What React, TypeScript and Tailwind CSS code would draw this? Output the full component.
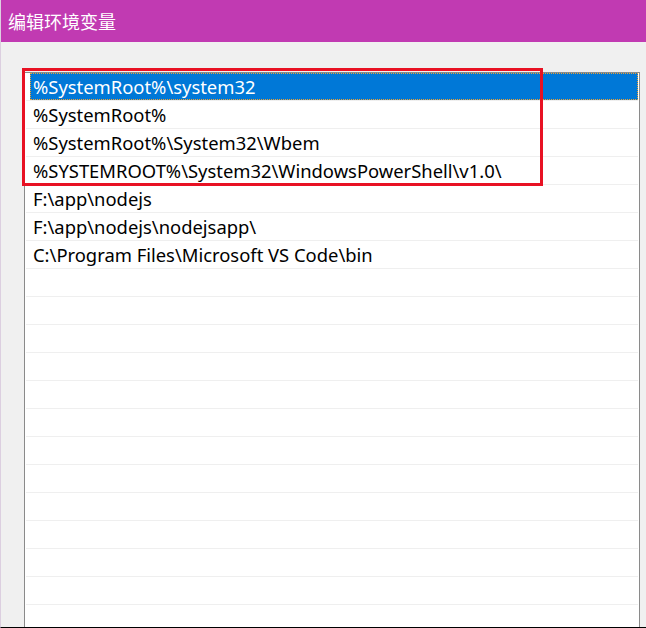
import React from 'react';

const paths = [
  '%SystemRoot%\\system32',
  '%SystemRoot%',
  '%SystemRoot%\\System32\\Wbem',
  '%SYSTEMROOT%\\System32\\WindowsPowerShell\\v1.0\\',
  'F:\\app\\nodejs',
  'F:\\app\\nodejs\\nodejsapp\\',
  'C:\\Program Files\\Microsoft VS Code\\bin',
];

const App: React.FC = () => {
  const rows = [...paths, ...Array(13).fill('')];

  return (
    <div className="relative h-[628px] w-[646px] overflow-hidden bg-[#f0f0f0] border-l border-[#dccfe0] border-b border-b-black flex flex-col font-['Noto_Sans','Noto_Sans_CJK_SC',sans-serif]">
      <div className="h-[42px] shrink-0 bg-[#c13ab2] pl-[7px] flex items-center text-white text-[18px] leading-none font-['Noto_Sans_CJK_SC',sans-serif]">
        编辑环境变量
      </div>

      <div className="flex-1 pt-[30px] pl-[23px] pr-[6px]">
        <div className="h-full border-t border-l border-r border-[#8a8a8a] bg-white px-[1px]">
          {rows.map((text, i) => (
            <div key={i} className="h-[28px] border-b border-[#efefef] flex items-stretch">
              {i === 0 ? (
                <div className="ml-[4px] flex-1 bg-[#0078d7] border border-dotted border-[#f0a030] flex items-center pl-[2px] pt-[1px] text-white text-[18.4px]">
                  {text}
                </div>
              ) : (
                <div className="flex-1 flex items-center pl-[7px] pt-[1px] text-black text-[18.4px]">{text}</div>
              )}
            </div>
          ))}
        </div>
      </div>

      <div className="absolute left-[21px] top-[68px] w-[521px] h-[118px] border-[3px] border-[#e81123]" />
    </div>
  );
};

export default App;
